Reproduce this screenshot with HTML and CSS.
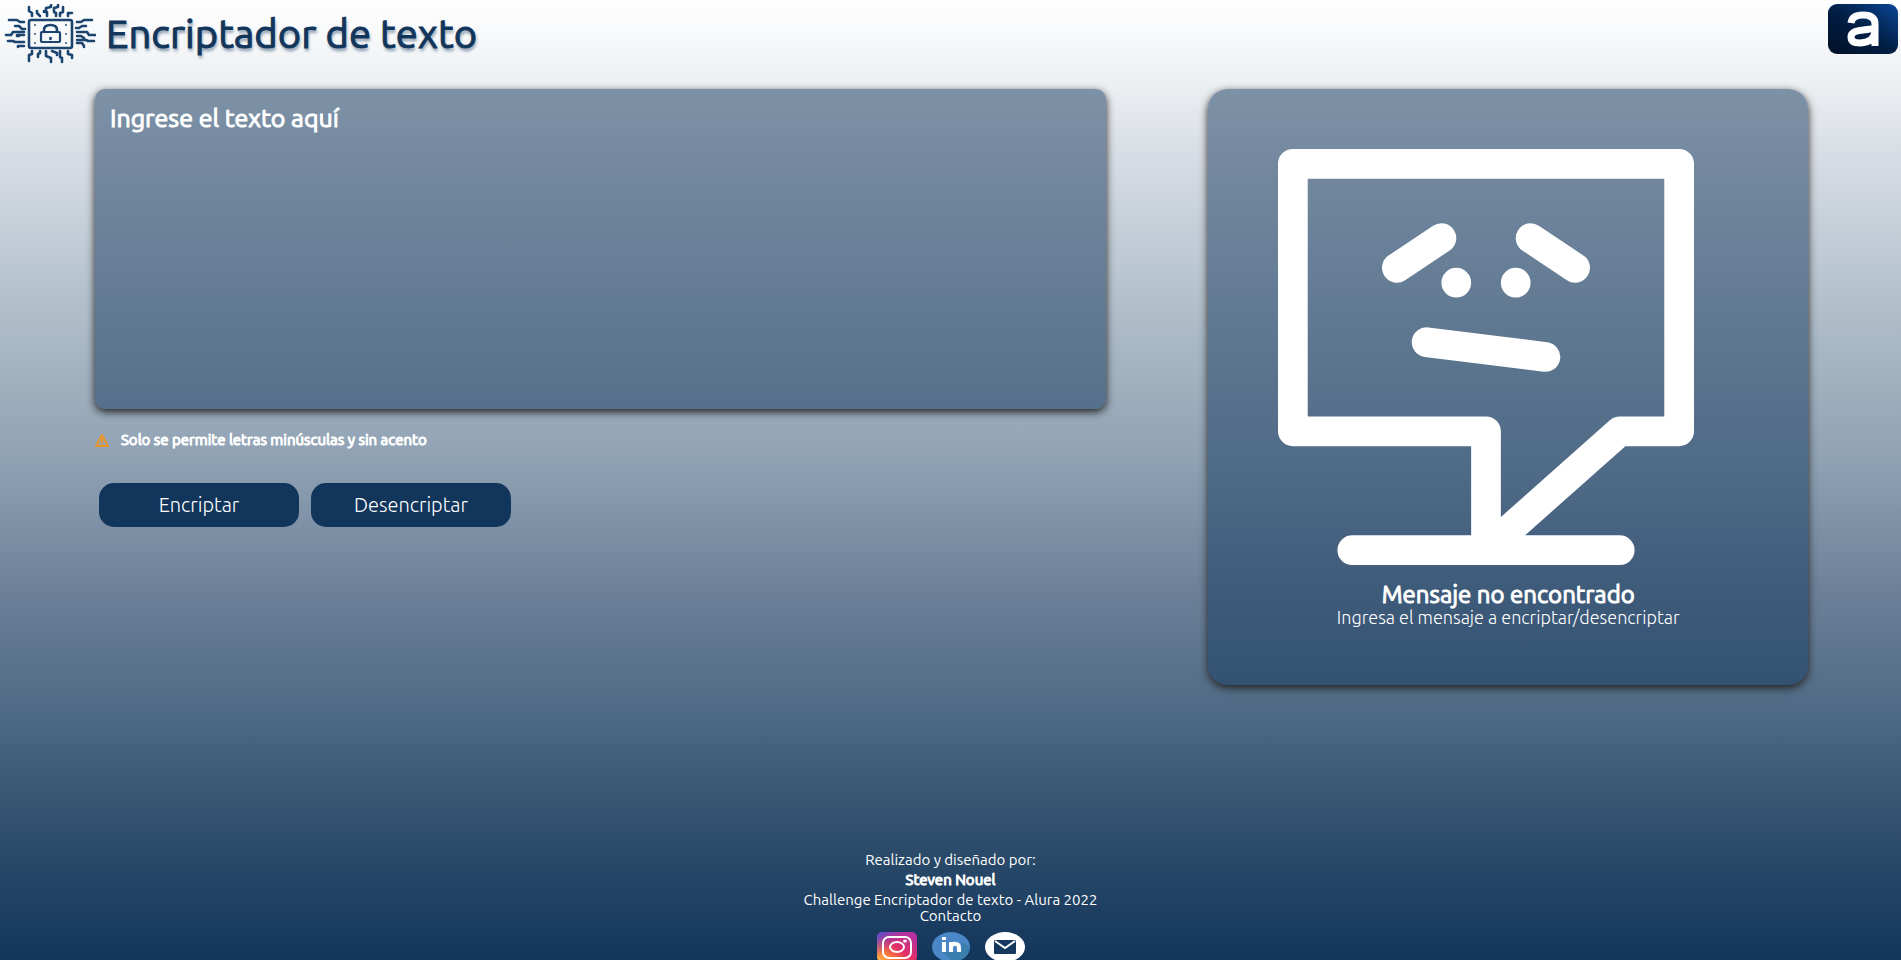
FILE: index.html
```html
<!DOCTYPE html>
<html lang="es">
<head>
<meta charset="utf-8">
<title>Encriptador de texto</title>
<link rel="stylesheet" href="styles.css">
</head>
<body>
<header class="header">
  <div class="brand">
    <svg class="chip" viewBox="4 4 92 62" aria-hidden="true">
      <g fill="none" stroke="#1b446f" stroke-width="2.6" stroke-linejoin="round" stroke-linecap="round">
        <rect x="29" y="20" width="43" height="28" rx="2"/>
        <rect stroke-width="2.2" x="41" y="32" width="19" height="10" rx="1"/>
        <path d="M44 32v-2q0-5 6.500-5t6.500 5v2M50.500 38v1"/>
        <path stroke-width="1.800" d="M35 25h0M66 25h0M35 43h0M66 43h0M35 34h0M66 34h0"/>
        <path d="M29 7v4l3 2v3M37 11v2l3 3M47 16v-4h-3v-1M46 12V8l5-1V5M56 16v-3l-2-1V8l4-1V5M60 16v-3l3-1V7M68 16v-3h4"/>
        <path d="M29 61v-6l3-1v-3M38 57v-3l2-1v-2M46 51v5l5 2v4M52 51l5 2v2M62 62v-4l-2-1v-6M68 51v3l4 1v3"/>
        <path d="M9 20h8l3 2h4M15 26h4l3 3h3M6 35h5l2-3h11M8 41h5l2 1h9M17 36h2l-2-1h7M18 47v-1h6"/>
        <path d="M92 20h-8l-3 2h-4M86 26h-4l-3 2h-3M95 35h-6l-2-3H77M94 41h-6l-2-1h-9M77 36h4l3 2M77 43h5l2 3v1"/>
      </g>
    </svg>
    <h1 class="title">Encriptador de texto</h1>
  </div>
  <svg class="alura" viewBox="0 0 70 50" role="img" aria-label="Alura">
    <defs><linearGradient id="navy" x1="0" y1="1" x2="1" y2="0"><stop offset="0" stop-color="#011025"/><stop offset=".5" stop-color="#021f45"/><stop offset="1" stop-color="#0a4696"/></linearGradient></defs>
    <rect width="70" height="50" rx="9" fill="url(#navy)"/>
    <path d="M23 19q1-8 12-8 12 0 12 9v22M47 24q-3 1-12 2-12 1-12 7 0 6 9 6 15-1 15-12" fill="none" stroke="#fff" stroke-width="7"/>
  </svg>
</header>

<main class="main">
  <section class="editor">
    <textarea class="input" aria-label="Texto" placeholder="Ingrese el texto aquí"></textarea>
    <p class="warning"><svg viewBox="0 0 14 13" aria-hidden="true"><path d="M7 1 13 12H1ZM7 4v5M7 10v1" fill="none" stroke="#e8962e" stroke-width="2"/></svg>Solo se permite letras minúsculas y sin acento</p>
    <div class="actions">
      <button class="button" type="button">Encriptar</button>
      <button class="button" type="button">Desencriptar</button>
    </div>
  </section>
  <section class="result">
    <svg class="face" viewBox="0 0 28 28" aria-hidden="true">
      <g fill="none" stroke="#fff" stroke-width="2" stroke-linecap="round" stroke-linejoin="round">
        <path d="M14 27V19H1V1H27V19H23L14 27M5 27H23"/>
        <path d="M8 8 11 6M17 6 20 8M10 13 18 14M12 9h0M16 9h0"/>
      </g>
    </svg>
    <h2 class="result-title">Mensaje no encontrado</h2>
    <p class="result-text">Ingresa el mensaje a encriptar/desencriptar</p>
  </section>
</main>

<footer class="footer">
  <p>Realizado y diseñado por:</p>
  <p class="author">Steven Nouel</p>
  <p>Challenge Encriptador de texto - Alura 2022</p>
  <p class="contact">Contacto</p>
  <nav class="social">
    <a href="#" aria-label="Instagram"><svg viewBox="0 0 40 30">
      <defs><linearGradient id="sun" x1="0" y1="1" x2="1" y2="0"><stop offset="0" stop-color="#ffc34a"/><stop offset=".25" stop-color="#fb7a38"/><stop offset=".5" stop-color="#e22f68"/><stop offset="1" stop-color="#a92fae"/></linearGradient>
      <linearGradient id="sky" x1="0" y1="0" x2=".45" y2=".45"><stop offset="0" stop-color="#3c5bdc"/><stop offset="1" stop-color="#8a36c8" stop-opacity="0"/></linearGradient></defs>
      <rect width="40" height="30" rx="5" fill="url(#sun)"/><rect width="40" height="30" rx="5" fill="url(#sky)"/>
      <g fill="none" stroke="#fff" stroke-width="2"><rect x="6" y="5" width="28" height="21" rx="6"/><ellipse cx="20" cy="15" rx="7" ry="5"/></g><ellipse cx="28" cy="9" rx="2" ry="1.500" fill="#fff"/>
    </svg></a>
    <a href="#" aria-label="LinkedIn"><svg viewBox="0 0 40 30">
      <ellipse cx="20" cy="15" rx="19" ry="15" fill="#4a87c7"/><path d="M31 10 39 15Q38 28 22 30L11 20H30Z" fill="#387fae"/>
      <path d="M13 10v10M13 5v3M20 20V10M20 15q1-4 5-3 3 0 3 4v4" fill="none" stroke="#fff" stroke-width="4"/>
    </svg></a>
    <a href="#" aria-label="Correo"><svg viewBox="0 0 40 30">
      <ellipse cx="20" cy="15" rx="20" ry="15" fill="#fff"/><rect x="9" y="8" width="22" height="14" rx="1" fill="#16385e"/><path d="m10 9 10 7 10-7" fill="none" stroke="#fff" stroke-width="2"/>
    </svg></a>
  </nav>
</footer>
</body>
</html>
```
FILE: styles.css
```css
* { box-sizing: border-box; margin: 0; padding: 0; }
html { height: 100%; }
body {
  display: flex;
  flex-direction: column;
  height: 100vh;
  overflow: hidden;
  color: #fff;
  font-family: Ubuntu, "Noto Sans", sans-serif;
  background: linear-gradient(#fff 0%, #ebeff2 9%, #d8dde5 16%, #b1bfca 32%, #8a9db0 50%, #6d8199 61%, #56708a 71%, #34526f 85%, #12355b 100%);
}
.header { display: flex; justify-content: space-between; padding: 4px 3px 0 4px; }
.brand { display: flex; gap: 10px; }
.chip { width: 92px; height: 62px; }
.title {
  color: #12355b;
  font-size: 40px;
  font-weight: 400;
  line-height: 60px;
  -webkit-text-stroke: 1px #12355b;
  text-shadow: 1px 3px 3px rgba(18, 53, 91, .5);
}
.alura { width: 70px; height: 50px; }
.main { display: flex; align-items: flex-start; justify-content: space-between; padding: 23px 93px 0 95px; }
.editor { width: 59%; }
.input {
  display: block;
  width: 100%;
  height: 320px;
  padding: 11px 15px;
  border: 0;
  border-radius: 10px;
  outline: 0;
  resize: none;
  color: #fff;
  font: 400 25px/36px Ubuntu, "Noto Sans", sans-serif;
  -webkit-text-stroke: 1px #fff;
  background: rgba(18, 53, 91, .5);
  box-shadow: 0 3px 8px #222;
}
.input::placeholder { color: #fff; opacity: 1; }
.warning { display: flex; align-items: center; gap: 12px; margin-top: 20px; font-size: 15px; line-height: 22px; -webkit-text-stroke: 1px #fff; }
.warning svg { width: 14px; height: 13px; }
.actions { display: flex; gap: 12px; padding: 32px 4px; }
.button {
  width: 200px;
  height: 44px;
  border: 0;
  border-radius: 15px;
  color: #fff;
  font: 300 20px/28px Ubuntu, "Noto Sans", sans-serif;
  background: #12355b;
}
.result {
  width: 35%;
  padding: 60px 70px 58px;
  border-radius: 20px;
  text-align: center;
  background: rgba(18, 53, 91, .5);
  box-shadow: 0 3px 8px #222;
}
.face { display: block; width: 416px; height: 416px; }
.result-title { margin-top: 18px; font-size: 24px; font-weight: 400; line-height: 24px; -webkit-text-stroke: 1px #fff; }
.result-text { font-size: 18px; font-weight: 300; line-height: 20px; }
.footer { margin-top: auto; text-align: center; font-size: 15px; line-height: 20px; }
.author { -webkit-text-stroke: 1px #fff; }
.contact { line-height: 12px; }
.social { display: flex; justify-content: center; gap: 14px; height: 38px; padding-top: 10px; }
.social svg { display: block; width: 40px; height: 30px; }
```
